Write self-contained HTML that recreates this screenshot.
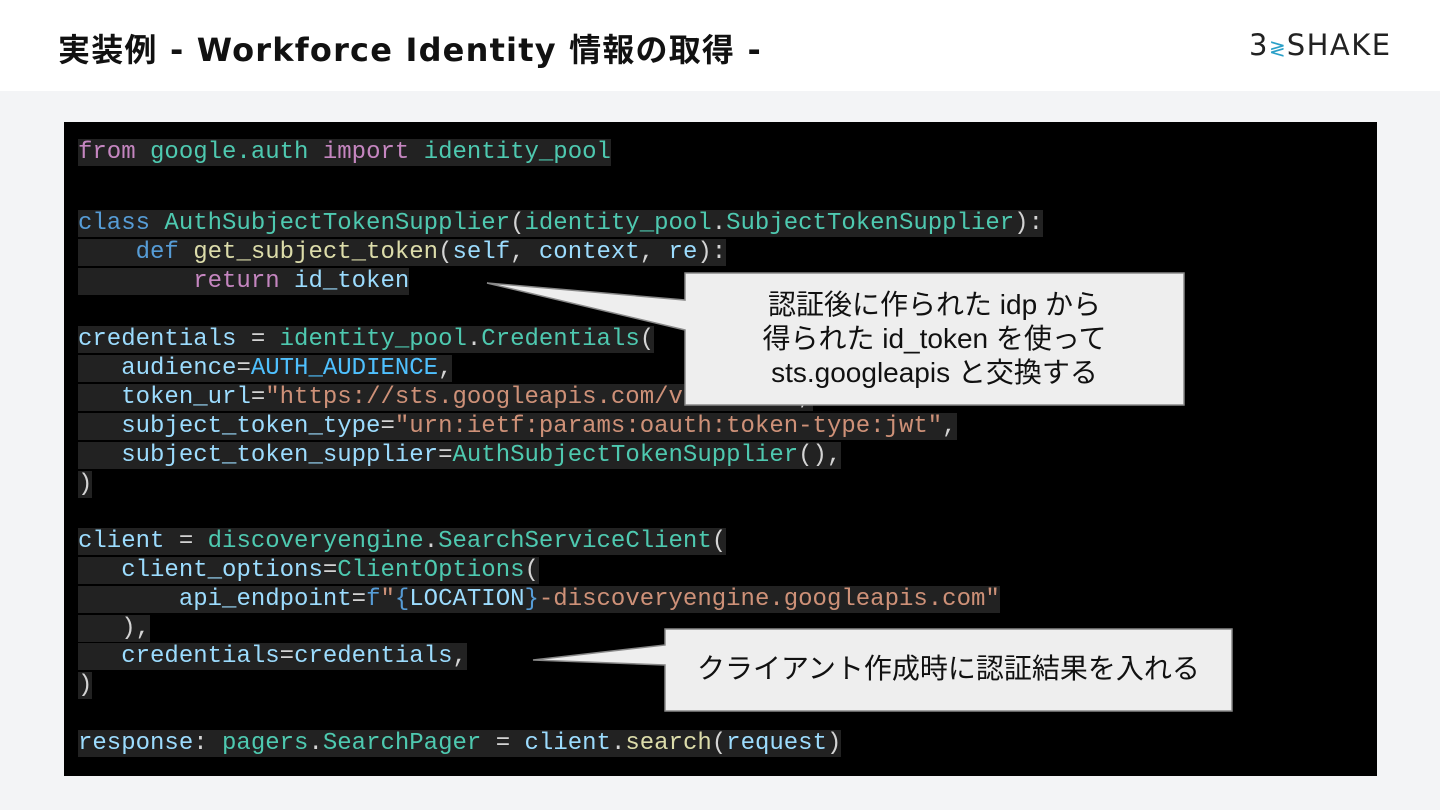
<!DOCTYPE html>
<html><head><meta charset="utf-8"><style>
body{margin:0;width:1440px;height:810px;background:#f3f4f6;position:relative;overflow:hidden;font-family:"Liberation Sans","Noto Sans CJK JP",sans-serif}
.top{position:absolute;left:0;top:0;width:1440px;height:91px;background:#fff}
.title{position:absolute;left:58px;top:25px;font-size:32px;font-weight:bold;color:#111;font-family:"DejaVu Sans","Noto Sans CJK JP",sans-serif;letter-spacing:1.2px}
.logo{position:absolute;left:1249px;top:28px;font-size:29px;color:#222;letter-spacing:1.5px;font-family:"DejaVu Sans",sans-serif}
.code{position:absolute;left:64px;top:122px;width:1313px;height:654px;background:#000}
.l{position:absolute;left:78px;height:27px;line-height:27px;font-family:"Liberation Mono",monospace;font-size:24px;color:#d4d4d4;white-space:pre}
.l span.b{background:#222}
.k{color:#c586c0}.t{color:#4ec9b0}.bl{color:#569cd6}.v{color:#9cdcfe}.y{color:#dcdcaa}.s{color:#ce9178}
.cap{position:absolute;color:#111;font-size:28px;text-align:center;line-height:34px}
</style></head><body>
<div class="top"></div>
<div class="title">実装例 - Workforce Identity 情報の取得 -</div>
<div class="logo">3<span style="color:#2aa0c8;font-size:20px;letter-spacing:1px">≷</span>SHAKE</div>
<div class="code"></div>
<div class="l" style="top:139px"><span class="b"><span class="k">from</span> <span class="t">google.auth</span> <span class="k">import</span> <span class="t">identity_pool</span></span></div>
<div class="l" style="top:210px"><span class="b"><span class="bl">class</span> <span class="t">AuthSubjectTokenSupplier</span>(<span class="t">identity_pool</span>.<span class="t">SubjectTokenSupplier</span>):</span></div>
<div class="l" style="top:239px"><span class="b">    <span class="bl">def</span> <span class="y">get_subject_token</span>(<span class="v">self</span>, <span class="v">context</span>, <span class="v">re</span>):</span></div>
<div class="l" style="top:268px"><span class="b">        <span class="k">return</span> <span class="v">id_token</span></span></div>
<div class="l" style="top:326px"><span class="b"><span class="v">credentials</span> = <span class="t">identity_pool</span>.<span class="t">Credentials</span>(</span></div>
<div class="l" style="top:355px"><span class="b">   <span class="v">audience</span>=<span class="bl" style="color:#4fc1ff">AUTH_AUDIENCE</span>,</span></div>
<div class="l" style="top:384px"><span class="b">   <span class="v">token_url</span>=<span class="s">"https://sts.googleapis.com/v1/token"</span>,</span></div>
<div class="l" style="top:413px"><span class="b">   <span class="v">subject_token_type</span>=<span class="s">"urn:ietf:params:oauth:token-type:jwt"</span>,</span></div>
<div class="l" style="top:442px"><span class="b">   <span class="v">subject_token_supplier</span>=<span class="t">AuthSubjectTokenSupplier</span>(),</span></div>
<div class="l" style="top:471px"><span class="b">)</span></div>
<div class="l" style="top:528px"><span class="b"><span class="v">client</span> = <span class="t">discoveryengine</span>.<span class="t">SearchServiceClient</span>(</span></div>
<div class="l" style="top:557px"><span class="b">   <span class="v">client_options</span>=<span class="t">ClientOptions</span>(</span></div>
<div class="l" style="top:586px"><span class="b">       <span class="v">api_endpoint</span>=<span class="bl">f</span><span class="s">"</span><span class="bl">{</span><span class="v">LOCATION</span><span class="bl">}</span><span class="s">-discoveryengine.googleapis.com"</span></span></div>
<div class="l" style="top:615px"><span class="b">   ),</span></div>
<div class="l" style="top:643px"><span class="b">   <span class="v">credentials</span>=<span class="v">credentials</span>,</span></div>
<div class="l" style="top:672px"><span class="b">)</span></div>
<div class="l" style="top:730px"><span class="b"><span class="v">response</span>: <span class="t">pagers</span>.<span class="t">SearchPager</span> = <span class="v">client</span>.<span class="y">search</span>(<span class="v">request</span>)</span></div>
<svg style="position:absolute;left:0;top:0" width="1440" height="810">
<polygon points="685,273 1184,273 1184,405 685,405 685,330 487,283 685,300" fill="#eeeeee" stroke="#888" stroke-width="1.5"/>
<polygon points="665,629 1232,629 1232,711 665,711 665,665 533,660 665,645" fill="#eeeeee" stroke="#888" stroke-width="1.5"/>
</svg>
<div class="cap" style="left:685px;top:288px;width:499px">認証後に作られた idp から<br>得られた id_token を使って<br>sts.googleapis と交換する</div>
<div class="cap" style="left:665px;top:652px;width:567px">クライアント作成時に認証結果を入れる</div>
</body></html>
